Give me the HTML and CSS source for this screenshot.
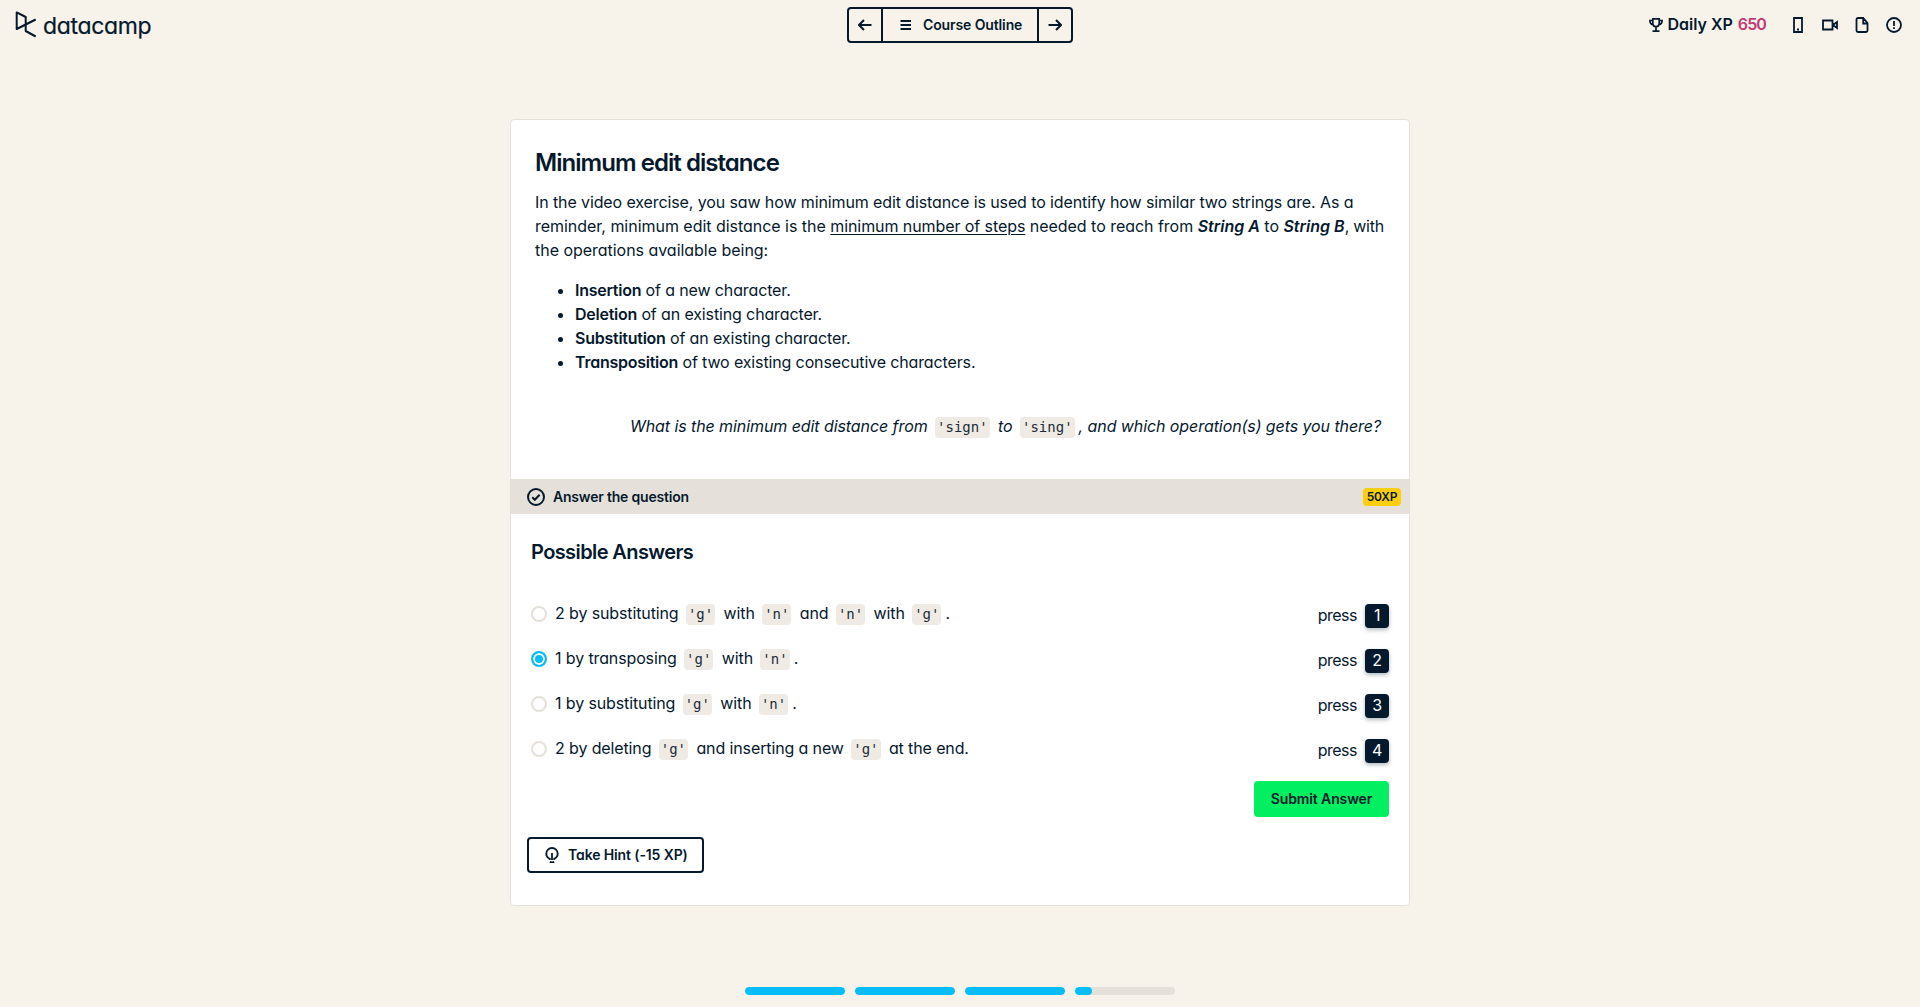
FILE: index.html
```
<!DOCTYPE html>
<html lang="en">
<head>
<meta charset="utf-8">
<title>Minimum edit distance | DataCamp</title>
<link rel="stylesheet" href="styles.css">
</head>
<body>
<header class="topbar">
  <a class="logo">
    <svg class="logo-mark" width="22" height="28" viewBox="0 0 22 28"><path d="M20.700 8.500 L1.700 18 V1.400 L10.700 6 V20 L20.700 25.500"/></svg>
    <span class="logo-text">datacamp</span>
  </a>
  <nav class="outline-nav">
    <button class="nav-arrow"><svg width="14" height="12" viewBox="0 0 14 12"><path d="M13.500 6H1.500M6 1L1 6l5 5"/></svg></button>
    <button class="nav-outline"><svg width="12" height="10" viewBox="0 0 12 10"><path d="M.5 1h10.500M.5 5h10.500M.5 9h10.500"/></svg><span>Course Outline</span></button>
    <button class="nav-arrow"><svg width="14" height="12" viewBox="0 0 14 12"><path d="M.5 6h12M8 1l5 5-5 5"/></svg></button>
  </nav>
  <div class="tools">
    <div class="xp">
      <svg width="14" height="14" viewBox="0 0 14 14"><path d="M3.800 .9h6.400v4.600a3.200 3.200 0 0 1-6.400 0zM3.500 2.500H.9c0 2.300 1 3.900 3.100 4.200M10.500 2.500h2.600c0 2.300-1 3.900-3.100 4.200M7 9v4M3.500 13.100h7"/></svg>
      <span class="xp-label">Daily XP</span><span class="xp-value">650</span>
    </div>
    <svg width="16" height="16" viewBox="0 0 16 16"><path d="M4 1h8v14H4zM7 12.500h2"/></svg>
    <svg width="16" height="16" viewBox="0 0 16 16"><path d="M1 3.500h9.500v9H1zM11 8l4-3v6z"/></svg>
    <svg width="16" height="16" viewBox="0 0 16 16"><path d="M9.200 1H4a1.500 1.500 0 0 0-1.500 1.500v11A1.500 1.500 0 0 0 4 15h8a1.500 1.500 0 0 0 1.500-1.500V6zV6.500h4.500"/></svg>
    <svg width="16" height="16" viewBox="0 0 16 16"><circle cx="8" cy="8" r="7"/><path d="M8 4v5M8 10.300v1.700"/></svg>
  </div>
</header>

<main class="card">
  <section class="exercise">
    <h1>Minimum edit distance</h1>
    <p class="intro"><span class="lead">In the video exercise, you saw how minimum edit distance is used to identify how similar two strings are. As a</span> reminder, minimum edit distance is the <u>minimum number of steps</u> needed to reach from <strong><em>String A</em></strong> to <strong><em>String B</em></strong><span class="tail">, with</span> the operations available being:</p>
    <ul>
      <li><strong>Insertion</strong> of a new character.</li>
      <li><strong>Deletion</strong> of an existing character.</li>
      <li><strong>Substitution</strong> of an existing character.</li>
      <li><strong>Transposition</strong> of two existing consecutive characters.</li>
    </ul>
    <p class="question"><em>What is the minimum edit distance from</em> <code>'sign'</code> <em>to</em> <code>'sing'</code><em>, and which operation(s) gets you there?</em></p>
  </section>

  <div class="answer-bar">
    <svg width="18" height="18" viewBox="0 0 18 18"><circle cx="9" cy="9" r="8"/><path d="M5.300 9.200l2.500 2.500 4.800-5"/></svg>
    <span>Answer the question</span>
    <b class="badge">50XP</b>
  </div>

  <section class="answers">
    <h2>Possible Answers</h2>
    <label class="option"><i class="radio"></i><span class="text">2 by substituting <code>'g'</code> with <code>'n'</code> and <code>'n'</code> with <code>'g'</code>.</span><span class="press">press <kbd>1</kbd></span></label>
    <label class="option"><i class="radio checked"></i><span class="text">1 by transposing <code>'g'</code> with <code>'n'</code>.</span><span class="press">press <kbd>2</kbd></span></label>
    <label class="option"><i class="radio"></i><span class="text">1 by substituting <code>'g'</code> with <code>'n'</code>.</span><span class="press">press <kbd>3</kbd></span></label>
    <label class="option"><i class="radio"></i><span class="text">2 by deleting <code>'g'</code> and inserting a new <code>'g'</code> at the end.</span><span class="press">press <kbd>4</kbd></span></label>
    <button class="submit">Submit Answer</button>
  </section>
  <button class="hint"><svg width="14" height="16" viewBox="0 0 14 16"><path d="M4.800 13V11.800C2.600 10.800 1.300 8.900 1.300 6.700a5.700 5.700 0 0 1 11.400 0c0 2.200-1.300 4.100-3.500 5.100V13M7 6v7M4.800 14.900c1.400 .6 3 .6 4.400 0"/></svg><span>Take Hint (-15 XP)</span></button>
</main>

<footer class="progress">
  <div class="track"><div class="fill" style="width:100%"></div></div>
  <div class="track"><div class="fill" style="width:100%"></div></div>
  <div class="track"><div class="fill" style="width:100%"></div></div>
  <div class="track"><div class="fill" style="width:17%"></div></div>
</footer>
</body>
</html>
```
FILE: styles.css
```
:root {
  --navy: #05192d;
  --beige: #f7f3eb;
  --stone: #e5e1da;
  --blue: #06bdfc;
}
* { box-sizing: border-box; }
body {
  margin: 0;
  height: 1007px;
  display: flex;
  flex-direction: column;
  background: var(--beige);
  color: var(--navy);
  font: 400 16px/24px Inter, "Liberation Sans", sans-serif;
  font-feature-settings: "cv11";
  overflow: hidden;
}
svg { display: block; flex: none; fill: none; stroke: currentColor; stroke-width: 2; }
button {
  font: 600 14px/20px Inter, sans-serif;
  font-feature-settings: inherit;
  letter-spacing: -.12px;
  color: inherit;
  background: none;
  border: 0;
  padding: 0;
  display: flex;
  align-items: center;
}
h1, h2, p, ul { margin: 0; }
strong { font-weight: 600; letter-spacing: -.25px; }

.topbar {
  height: 50px;
  flex: none;
  display: grid;
  grid-template-columns: 1fr auto 1fr;
  align-items: center;
  padding: 0 18px;
}
.logo { display: flex; align-items: center; gap: 6px; margin-left: -3px; }
.logo-mark { stroke-linejoin: round; }
.logo-text { font-size: 23px; line-height: 28px; letter-spacing: -.35px; padding-top: 1px; -webkit-text-stroke: .2px currentColor; }
.outline-nav { display: flex; height: 36px; border: 2px solid var(--navy); border-radius: 4px; }
.nav-arrow { width: 32px; justify-content: center; }
.nav-outline { width: 158px; gap: 11px; padding-left: 17px; border: solid var(--navy); border-width: 0 2px; }
.tools { display: flex; justify-content: flex-end; align-items: center; gap: 16px; }
.tools svg { stroke-width: 1.8; }
.xp { display: flex; align-items: center; font-weight: 600; line-height: 22px; padding-bottom: 1px; margin-right: 8px; }
.xp .xp-label, .xp .xp-value { margin-top: -1px; }
.xp svg { stroke-width: 1.7; }
.xp-label { margin: 0 5px; }
.xp-value { color: #bf3b74; letter-spacing: -.9px; }

.card {
  width: 900px;
  height: 787px;
  flex: none;
  margin: 69px auto 0;
  background: #fff;
  border: 1px solid var(--stone);
  border-radius: 4px;
}
.exercise { height: 359px; padding: 27px 24px 0; }
h1 { font-size: 24px; line-height: 32px; font-weight: 600; letter-spacing: -.95px; margin-bottom: 11px; }
.intro { margin-right: -8px; letter-spacing: -.03px; }
.lead { letter-spacing: -.11px; }
.tail { letter-spacing: -.25px; }
.intro strong { letter-spacing: 0; }
u { letter-spacing: -.08px; text-underline-offset: 2px; text-decoration-thickness: 1px; }
ul { margin-top: 16px; padding-left: 40px; letter-spacing: -.13px; }
.question { margin-top: 40px; padding-right: 4px; text-align: right; letter-spacing: -.08px; }
code {
  font: 400 14px/1 "DejaVu Sans Mono", monospace;
  letter-spacing: 0;
  color: #1c2b38;
  background: #efebe4;
  border-radius: 4px;
  padding: 2px 2px 3px;
  margin: 0 4px 0 3px;
}

.answer-bar {
  height: 35px;
  display: flex;
  align-items: center;
  gap: 8px;
  padding: 0 8px 0 16px;
  background: var(--stone);
  font-weight: 600;
  font-size: 14px;
  letter-spacing: -.2px;
}
.badge {
  margin-left: auto;
  width: 38px;
  height: 18px;
  border-radius: 4px;
  background: #fcce0d;
  font: 600 12px/18px Inter, sans-serif;
  letter-spacing: -.2px;
  text-align: center;
}
.answers { padding: 26px 20px 0; }
h2 { font-size: 20px; line-height: 24px; font-weight: 600; letter-spacing: -.6px; margin-bottom: 39px; }
.option { display: flex; height: 45px; align-items: flex-start; }
.radio { width: 16px; height: 16px; margin: 3px 8px 0 0; border: 2px solid var(--stone); border-radius: 50%; background: #fff; }
.radio.checked { border-color: var(--blue); background: var(--blue); box-shadow: inset 0 0 0 2px #fff; }
.text { margin-top: -2px; letter-spacing: -.12px; }
.press { margin-left: auto; display: flex; gap: 8px; padding-top: 1px; line-height: 23px; letter-spacing: -.5px; }
kbd {
  width: 24px;
  height: 24px;
  border-radius: 4px;
  background: var(--navy);
  color: #fff;
  font: inherit;
  text-align: center;
  box-shadow: 0 2px 4px rgba(5, 25, 45, .3);
}
.submit { width: 135px; height: 36px; margin: -2px 0 0 auto; justify-content: center; background: #03ef62; border-radius: 4px; }
.hint { width: 177px; height: 36px; margin: 20px 0 0 16px; padding-left: 16px; gap: 9px; border: 2px solid var(--navy); border-radius: 4px; }
.hint svg { stroke-width: 1.8; }

.progress { display: flex; justify-content: center; gap: 10px; margin-top: auto; padding-bottom: 12px; }
.track { width: 100px; height: 8px; border-radius: 4px; background: var(--stone); overflow: hidden; }
.fill { height: 100%; border-radius: 4px; background: var(--blue); }
```
